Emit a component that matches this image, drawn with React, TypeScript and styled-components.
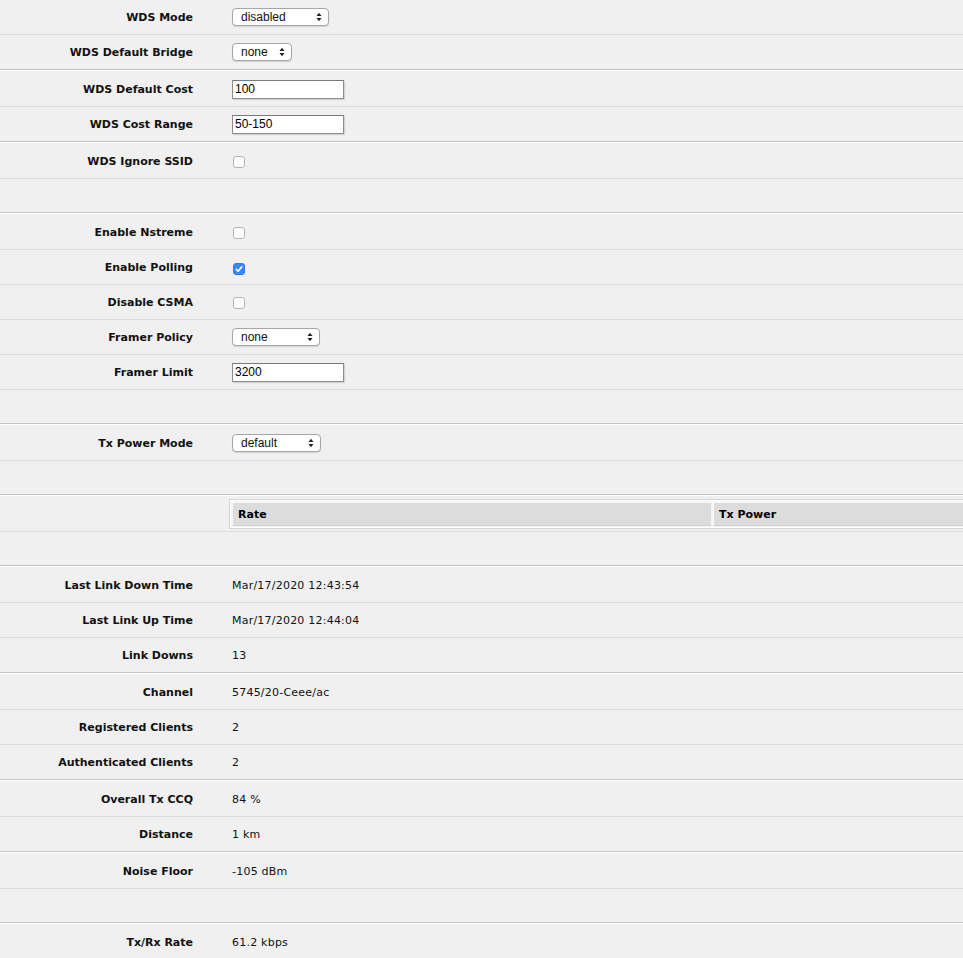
import React from "react";
import styled, { createGlobalStyle, css } from "styled-components";

const GlobalStyle = createGlobalStyle`
  html, body { margin: 0; padding: 0; background: #f0f0f0; }
  body {
    font-family: "DejaVu Sans", Verdana, sans-serif;
    font-size: 11px;
    color: #000;
    overflow: hidden;
  }
`;

const Page = styled.div`
  display: flex;
  flex-direction: column;
  width: 963px;
  overflow: hidden;
`;

const Group = styled.section<{ $first?: boolean }>`
  display: flex;
  flex-direction: column;
  ${(p) =>
    !p.$first &&
    css`
      border-top: 1px solid #c4c4c4;
      box-shadow: inset 0 1px 0 #ffffff;
      padding-top: 2px;
    `}
  & > *:not(:last-child) {
    border-bottom: 1px solid #dcdcdc;
  }
`;

const Row = styled.div<{ $h?: number }>`
  display: grid;
  grid-template-columns: 193px 1fr;
  column-gap: 39px;
  align-items: center;
  height: ${(p) => p.$h ?? 34}px;
`;

const Label = styled.div`
  font-weight: bold;
  text-align: right;
  white-space: nowrap;
  color: #111;
`;

const Value = styled.div`
  white-space: nowrap;
  letter-spacing: 0.22px;
  color: #111;
`;

const SelectBox = styled.div<{ $w: number }>`
  box-sizing: border-box;
  width: ${(p) => p.$w}px;
  height: 18px;
  display: flex;
  align-items: center;
  justify-content: space-between;
  padding: 0 6px 0 8px;
  background: #fff;
  border: 1px solid #a6a6a6;
  border-radius: 4px;
  box-shadow: 0 1px 1px rgba(0, 0, 0, 0.12);
  font-family: "Liberation Sans", Arial, sans-serif;
  font-size: 12px;
  color: #111;
`;

const TextInput = styled.div`
  box-sizing: border-box;
  width: 112px;
  height: 19px;
  display: flex;
  align-items: center;
  padding: 0 2px;
  background: #fff;
  border: 1px solid #8e8e8e;
  border-top-color: #7a7a7a;
  box-shadow: 1px 1px 1px rgba(0, 0, 0, 0.12);
  font-family: "Liberation Sans", Arial, sans-serif;
  font-size: 12px;
  color: #000;
`;

const Check = styled.span<{ $on?: boolean }>`
  box-sizing: border-box;
  display: inline-flex;
  align-items: center;
  justify-content: center;
  width: 12px;
  height: 12px;
  margin-left: 1px;
  margin-top: 5px;
  border-radius: 3px;
  border: 1px solid ${(p) => (p.$on ? "#2f7ae8" : "#b3b3b3")};
  background: ${(p) => (p.$on ? "#3b88f5" : "#ffffff")};
`;

const TableWrap = styled.div`
  margin-left: -2px;
  width: 964px;
  box-sizing: border-box;
  border: 1px solid #ffffff;
  outline: 1px solid #d4d4d4;
  display: grid;
  grid-template-columns: 1fr 1fr;
  column-gap: 2px;
  padding: 1px;
  background: #f4f4f4;
`;

const HeadCell = styled.div`
  height: 22px;
  display: flex;
  align-items: center;
  padding: 0 5px;
  background: #dcdcdc;
  border-top: 1px solid #f8f8f8;
  border-left: 1px solid #f8f8f8;
  border-bottom: 1px solid #cfcfcf;
  font-weight: bold;
`;

const Arrows = () => (
  <svg width="6" height="10" viewBox="0 0 6 10" aria-hidden>
    <path d="M0.5 4 L3 0.8 L5.5 4 Z" fill="#222" />
    <path d="M0.5 6 L3 9.2 L5.5 6 Z" fill="#222" />
  </svg>
);

const Select = ({ value, w }: { value: string; w: number }) => (
  <SelectBox $w={w}>
    <span>{value}</span>
    <Arrows />
  </SelectBox>
);

const Checkbox = ({ on }: { on?: boolean }) => (
  <Check $on={on}>
    {on && (
      <svg width="10" height="10" viewBox="0 0 10 10" aria-hidden>
        <path d="M2.2 5.3 L4.1 7.2 L7.8 2.8" stroke="#fff" strokeWidth="1.6" fill="none" strokeLinecap="round" strokeLinejoin="round" />
      </svg>
    )}
  </Check>
);

type Item = { label?: string; node?: React.ReactNode; h?: number };

const groups: Item[][] = [
  [
    { label: "WDS Mode", node: <Select value="disabled" w={97} /> },
    { label: "WDS Default Bridge", node: <Select value="none" w={60} /> },
  ],
  [
    { label: "WDS Default Cost", node: <TextInput>100</TextInput> },
    { label: "WDS Cost Range", node: <TextInput>50-150</TextInput> },
  ],
  [{ label: "WDS Ignore SSID", node: <Checkbox /> }, { h: 33 }],
  [
    { label: "Enable Nstreme", node: <Checkbox /> },
    { label: "Enable Polling", node: <Checkbox on /> },
    { label: "Disable CSMA", node: <Checkbox /> },
    { label: "Framer Policy", node: <Select value="none" w={88} /> },
    { label: "Framer Limit", node: <TextInput>3200</TextInput> },
    { h: 33 },
  ],
  [{ label: "Tx Power Mode", node: <Select value="default" w={89} /> }, { h: 33 }],
  [
    {
      node: (
        <TableWrap>
          <HeadCell>Rate</HeadCell>
          <HeadCell>Tx Power</HeadCell>
        </TableWrap>
      ),
    },
    { h: 33 },
  ],
  [
    { label: "Last Link Down Time", node: <Value>Mar/17/2020 12:43:54</Value> },
    { label: "Last Link Up Time", node: <Value>Mar/17/2020 12:44:04</Value> },
    { label: "Link Downs", node: <Value>13</Value> },
  ],
  [
    { label: "Channel", node: <Value>5745/20-Ceee/ac</Value> },
    { label: "Registered Clients", node: <Value>2</Value> },
    { label: "Authenticated Clients", node: <Value>2</Value> },
  ],
  [
    { label: "Overall Tx CCQ", node: <Value>84 %</Value> },
    { label: "Distance", node: <Value>1 km</Value> },
  ],
  [{ label: "Noise Floor", node: <Value>-105 dBm</Value> }, { h: 33 }],
  [{ label: "Tx/Rx Rate", node: <Value>61.2 kbps</Value> }],
];

export default function App() {
  return (
    <>
      <GlobalStyle />
      <Page>
        {groups.map((g, gi) => (
          <Group key={gi} $first={gi === 0}>
            {g.map((it, i) => (
              <Row key={i} $h={it.h}>
                <Label>{it.label ?? ""}</Label>
                <div>{it.node}</div>
              </Row>
            ))}
          </Group>
        ))}
      </Page>
    </>
  );
}
